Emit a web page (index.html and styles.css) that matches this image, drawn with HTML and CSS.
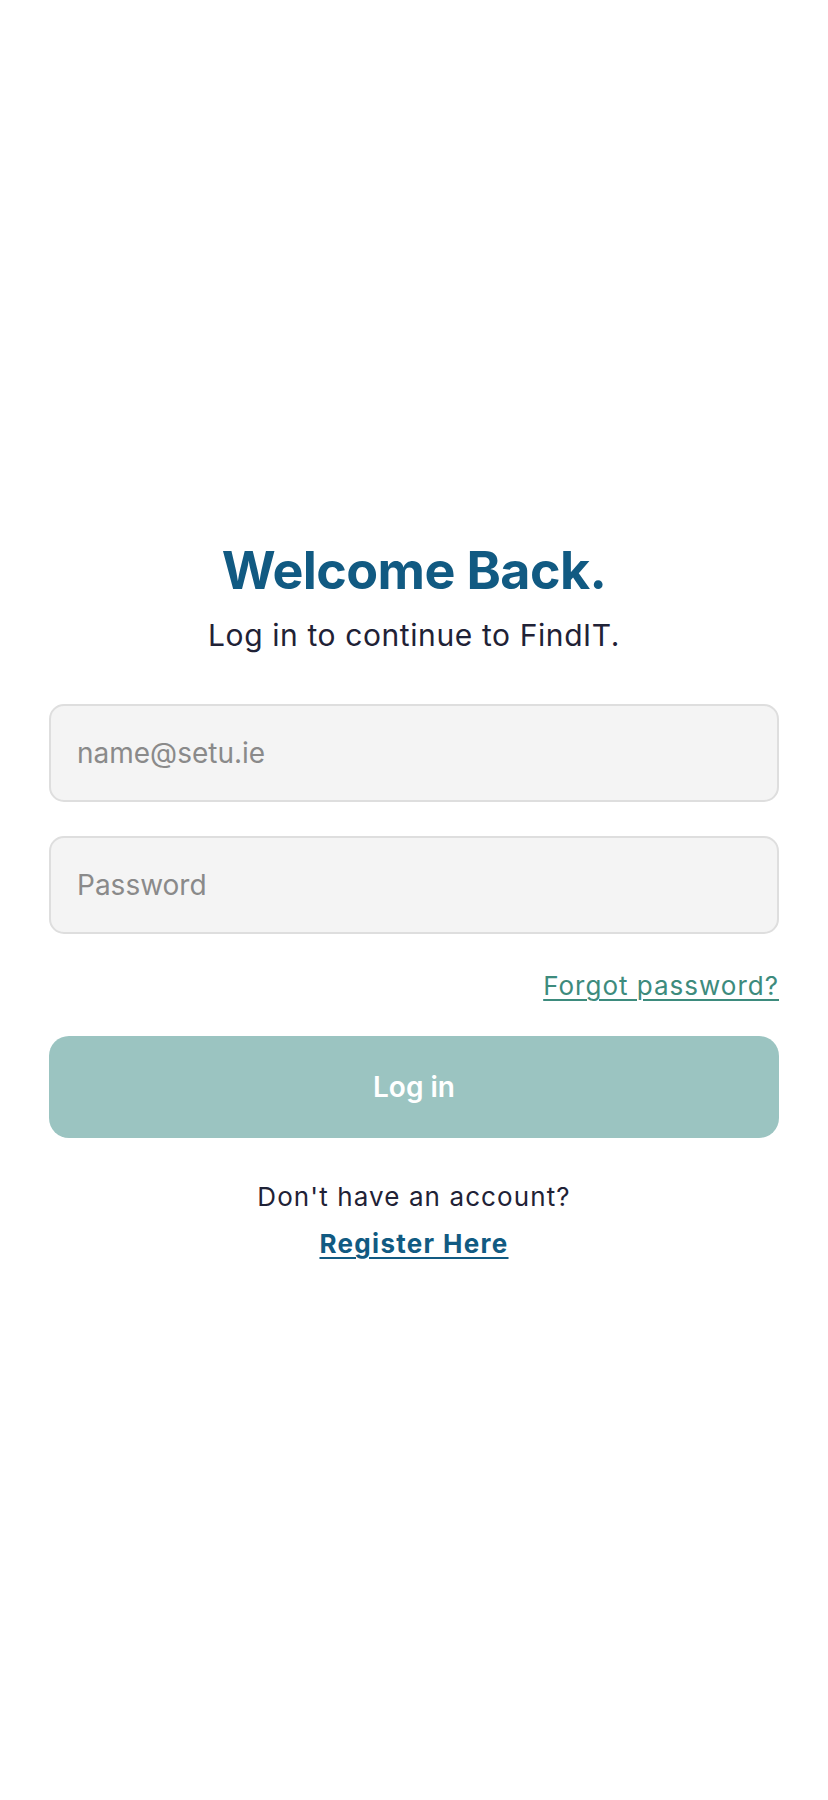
FILE: index.html
```html
<!DOCTYPE html>
<html lang="en">
<head>
<meta charset="utf-8">
<title>FindIT – Log in</title>
<link rel="stylesheet" href="styles.css">
</head>
<body>
<main class="screen">
  <h1 class="title">Welcome Back.</h1>
  <p class="subtitle">Log in to continue to FindIT.</p>
  <form class="form">
    <input class="field field-email" type="email" placeholder="name@setu.ie">
    <input class="field field-password" type="password" placeholder="Password">
    <a class="forgot" href="#">Forgot password?</a>
    <button class="login" type="button">Log in</button>
  </form>
  <p class="no-account">Don't have an account?</p>
  <a class="register" href="#">Register Here</a>
</main>
</body>
</html>
```

FILE: styles.css
```css
* { box-sizing: border-box; }
html, body { margin: 0; padding: 0; background: #ffffff; }
body {
  font-family: Inter, "Noto Sans", "Liberation Sans", sans-serif;
  color: #1f2236;
}
.screen {
  min-height: 1800px;
  display: flex;
  flex-direction: column;
  align-items: center;
  justify-content: center;
  padding: 0 49px;
}
.title {
  margin: 0;
  font-size: 52px;
  line-height: 62px;
  font-weight: 700;
  color: #115a82;
  letter-spacing: -0.6px;
}
.subtitle {
  margin: 15px 0 0;
  font-size: 30px;
  line-height: 36px;
  font-weight: 400;
  color: #1f2236;
  letter-spacing: 0.6px;
}
.form {
  width: 100%;
  margin-top: 51px;
  display: flex;
  flex-direction: column;
}
.field {
  width: 100%;
  height: 98px;
  border: 2px solid #dedede;
  border-radius: 15px;
  background: #f4f4f4;
  padding: 0 26px;
  font-family: inherit;
  font-size: 28px;
  color: #1f2236;
  outline: none;
}
.field::placeholder { color: #8a8a8a; }
.field-password { margin-top: 34px; }
.forgot {
  align-self: flex-end;
  margin-top: 36px;
  font-size: 26px;
  line-height: 32px;
  color: #3d8b7d;
  letter-spacing: 1px;
  text-decoration: underline;
  text-underline-offset: 4px;
  text-decoration-thickness: 2px;
}
.login {
  margin-top: 34px;
  height: 102px;
  width: 100%;
  border: none;
  border-radius: 20px;
  background: #9bc4c1;
  color: #ffffff;
  font-family: inherit;
  font-size: 28px;
  font-weight: 600;
}
.no-account {
  margin: 43px 0 0;
  font-size: 26px;
  line-height: 32px;
  color: #1f2236;
  letter-spacing: 1.1px;
}
.register {
  margin-top: 15px;
  font-size: 26px;
  line-height: 32px;
  font-weight: 700;
  color: #115a82;
  letter-spacing: 1.3px;
  text-decoration: underline;
  text-underline-offset: 4px;
  text-decoration-thickness: 2px;
}
```
